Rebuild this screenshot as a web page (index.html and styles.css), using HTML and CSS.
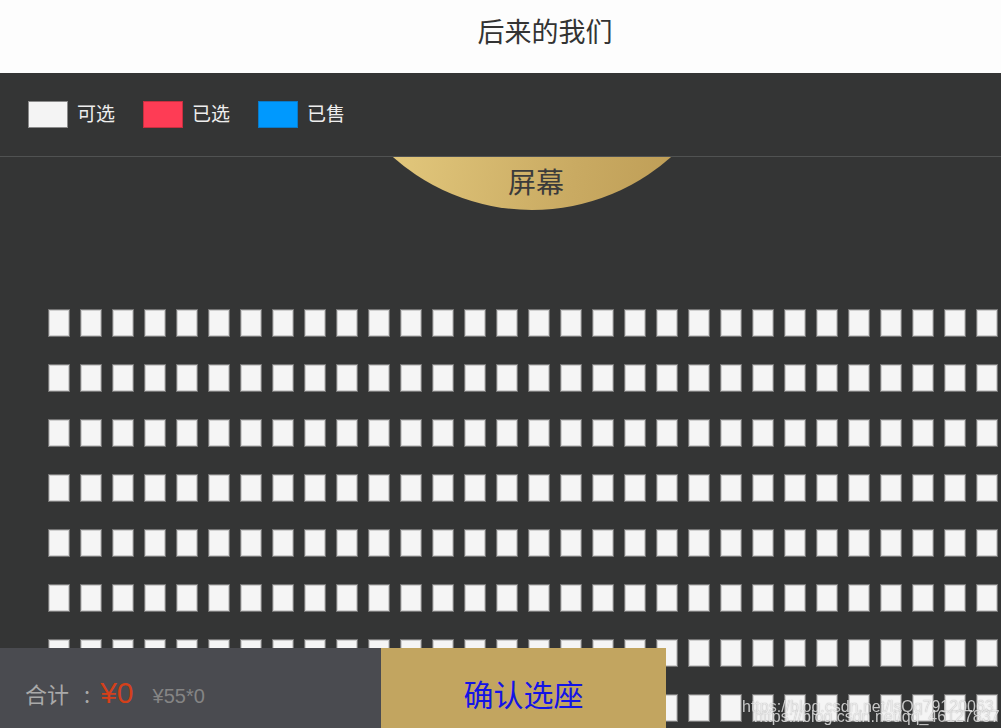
FILE: index.html
```html
<!DOCTYPE html>
<html lang="zh">
<head>
<meta charset="utf-8">
<title>选座</title>
<link rel="stylesheet" href="styles.css">
</head>
<body>
<header class="topbar"><h1 class="title">后来的我们</h1></header>
<section class="legend">
  <div class="legend-item"><span class="swatch swatch-free"></span><span class="legend-text">可选</span></div>
  <div class="legend-item"><span class="swatch swatch-picked"></span><span class="legend-text">已选</span></div>
  <div class="legend-item"><span class="swatch swatch-sold"></span><span class="legend-text">已售</span></div>
</section>
<section class="screen-wrap">
  <div class="screen"><span class="screen-text">屏幕</span></div>
</section>
<section class="seats" id="seats"></section>
<footer class="bottombar">
  <div class="total"><span class="total-label">合计</span><span class="total-colon">:</span><span class="total-price">¥0</span><span class="total-detail">¥55*0</span></div>
  <div class="confirm">确认选座</div>
</footer>
<div class="watermark">
  <span class="wm wm1">https://blog.csdn.net/lsQq79120063</span>
  <span class="wm wm2">https://blog.csdn.net/qq_46127837</span>
</div>
<script src="app.js"></script>
</body>
</html>
```
FILE: app.js
```js
(function () {
  var wrap = document.getElementById('seats');
  for (var r = 0; r < 8; r++) {
    var row = document.createElement('div');
    row.className = 'seat-row';
    for (var c = 0; c < 30; c++) {
      var s = document.createElement('span');
      s.className = 'seat';
      row.appendChild(s);
    }
    wrap.appendChild(row);
  }
})();
```
FILE: styles.css
```css
html, body {
  margin: 0;
  padding: 0;
  overflow: hidden;
  height: 100%;
}
body {
  background: #343535;
  font-family: "Noto Sans CJK SC", "Liberation Sans", sans-serif;
}
.topbar {
  background: #fdfdfd;
  height: 73px;
  display: flex;
  justify-content: center;
  padding-left: 89px;
  box-sizing: border-box;
}
.title {
  margin: 0;
  font-size: 27px;
  font-weight: 400;
  color: #333;
  line-height: 36px;
  padding-top: 13px;
}
.legend {
  height: 83px;
  border-bottom: 1px solid #505252;
  display: flex;
  align-items: center;
  padding-left: 28px;
  gap: 28px;
}
.legend-item {
  display: flex;
  align-items: center;
  gap: 9px;
}
.swatch {
  width: 40px;
  height: 27px;
  box-sizing: border-box;
  display: block;
}
.swatch-free { background: #f4f4f4; border: 1px solid #8a8a8a; }
.swatch-picked { background: #fe3c55; border: 1px solid #c7303f; }
.swatch-sold { background: #0099fe; border: 1px solid #0a7ac8; }
.legend-text {
  color: #eeeeee;
  font-size: 19px;
  line-height: 24px;
  margin-top: -3px;
}
.screen-wrap {
  height: 53px;
  overflow: hidden;
  padding-left: 323px;
}
.screen {
  width: 418px;
  height: 418px;
  margin-top: -365px;
  border-radius: 50%;
  background: linear-gradient(100deg, #f0d98c 0%, #e0c57a 30%, #c9aa62 65%, #b8964f 100%);
  display: flex;
  align-items: flex-end;
  justify-content: center;
  padding-bottom: 14px;
  padding-left: 8px;
  box-sizing: border-box;
}
.screen-text {
  color: #3b3b3b;
  font-size: 28px;
  line-height: 30px;
}
.seats {
  margin-top: 99px;
  padding-left: 48px;
  display: flex;
  flex-direction: column;
  gap: 27px;
}
.seat-row {
  display: flex;
  gap: 10px;
}
.seat {
  flex: none;
  width: 22px;
  height: 28px;
  box-sizing: border-box;
  background: #f5f5f5;
  border: 1px solid #747474;
  box-shadow: inset 0 0 0 1px #cfcfcf;
}
.bottombar {
  position: fixed;
  left: 0;
  bottom: 0;
  height: 80px;
  display: flex;
}
.total {
  width: 381px;
  background: #4a4b50;
  display: flex;
  align-items: baseline;
  padding: 28px 0 0 25px;
  box-sizing: border-box;
}
.total-label {
  color: #a9a9a9;
  font-size: 22px;
}
.total-colon {
  color: #a9a9a9;
  font-size: 22px;
  margin: 0 10px 0 15px;
}
.total-price {
  color: #d4401a;
  font-size: 30px;
  font-family: "Liberation Sans", sans-serif;
}
.total-detail {
  color: #858585;
  font-size: 20px;
  font-family: "Liberation Sans", sans-serif;
  margin-left: 19px;
}
.confirm {
  width: 285px;
  background: #c2a560;
  color: #1414e6;
  font-size: 30px;
  display: flex;
  align-items: center;
  justify-content: center;
  padding-top: 10px;
  box-sizing: border-box;
}
.watermark {
  position: fixed;
  right: 0;
  bottom: 0;
  width: 260px;
  height: 40px;
}
.wm {
  position: absolute;
  font-family: "Liberation Sans", sans-serif;
  font-size: 16px;
  color: rgba(255, 255, 255, 0.75);
  white-space: nowrap;
  text-shadow: 0 0 1px rgba(0,0,0,0.4);
}
.wm1 { left: 1px; top: 10px; }
.wm2 { left: 13px; top: 20px; }
```
